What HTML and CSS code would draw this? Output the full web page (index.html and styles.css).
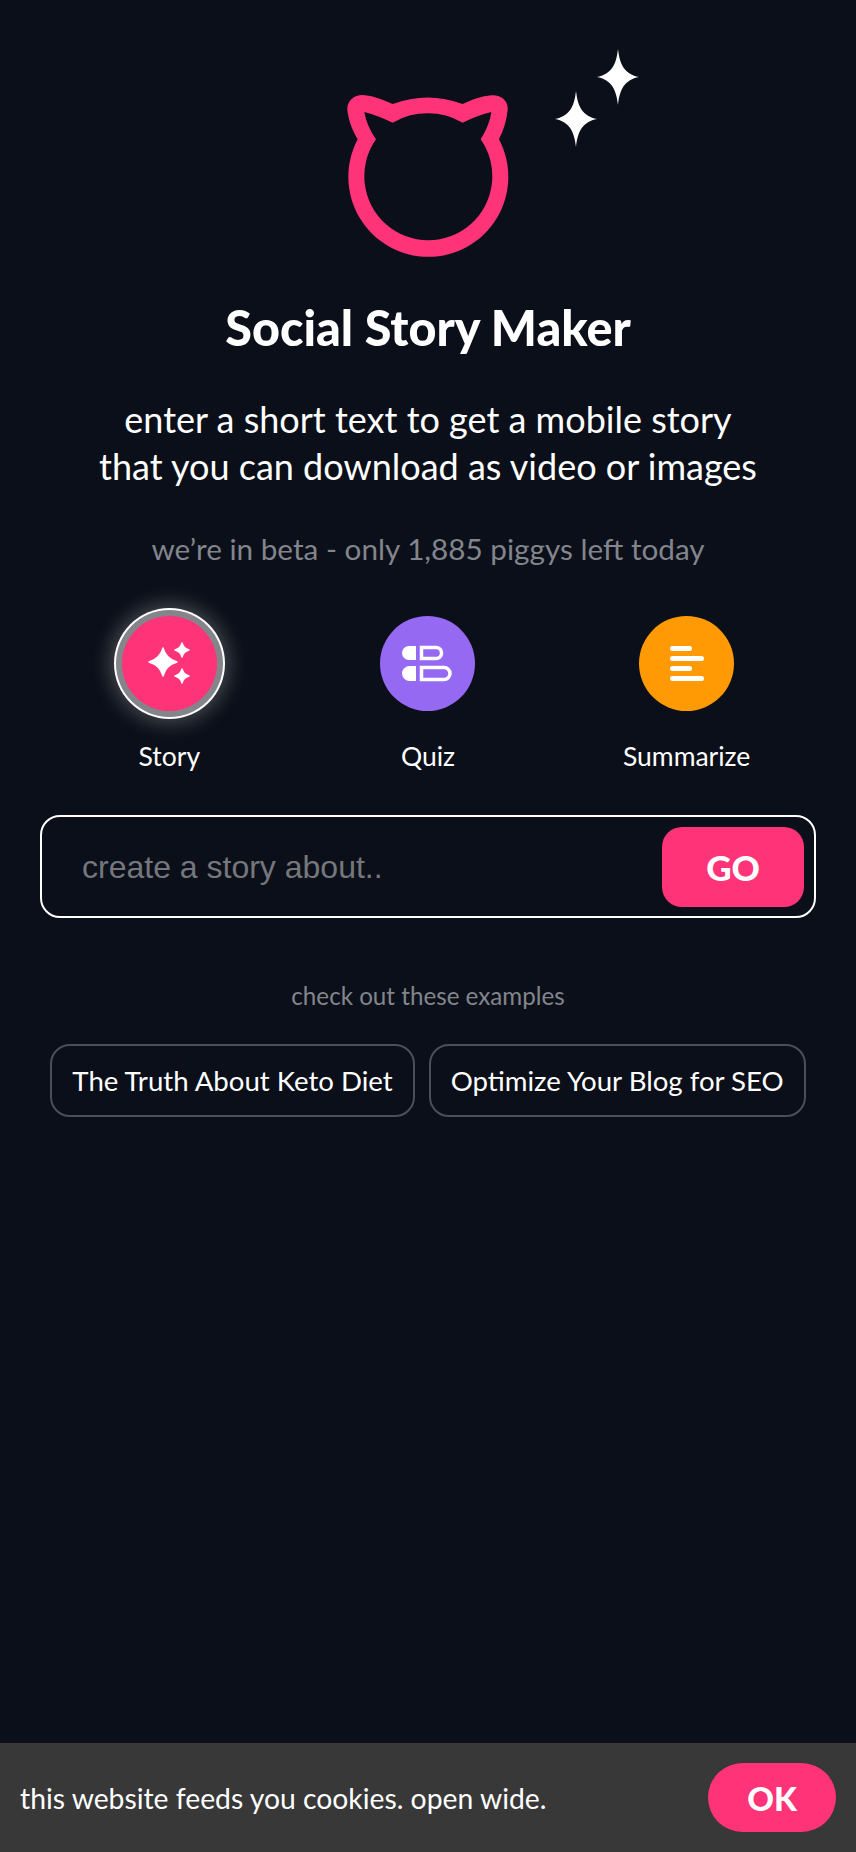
FILE: index.html
```html
<!DOCTYPE html>
<html lang="en">
  <head>
    <meta charset="UTF-8" />
    <title>Social Story Maker</title>
    <link rel="stylesheet" href="styles.css">
  </head>
  <body>
    <main class="content">
      <svg class="logo" width="440" height="215" viewBox="208 45 440 215">
        <g transform="translate(320 30) scale(0.3333)">
          <path class="logo-cat" fill-rule="evenodd" d="M218 222 A299 299 0 0 1 428 222 C455 210 485 198 515 196 C545 194 566 215 563 240 C560 270 552 298 537 328 A240 240 0 1 1 113 328 C95 298 85 268 82 240 C80 215 100 195 128 195 C160 197 190 210 218 222 Z M218 278 C190 265 160 252 133 246 C138 275 150 302 168 328 A192 192 0 1 0 482 328 C498 302 510 275 514 246 C485 252 455 265 428 278 A211 211 0 0 0 218 278 Z" />
        </g>
        <path class="logo-star" transform="translate(618 77)" d="M0 -28 C2 -11 7 -3 21 0 C7 3 2 11 0 28 C-2 11 -7 3 -21 0 C-7 -3 -2 -11 0 -28 Z" />
        <path class="logo-star" transform="translate(576 119)" d="M0 -28 C2 -11 7 -3 21 0 C7 3 2 11 0 28 C-2 11 -7 3 -21 0 C-7 -3 -2 -11 0 -28 Z" />
      </svg>

      <h1>Social Story Maker</h1>
      <p class="subtitle">enter a short text to get a mobile story<br>that you can download as video or images</p>
      <p class="beta">we’re in beta - only 1,885 piggys left today</p>

      <div class="modes">
        <div class="mode">
          <div class="mode-icon mode-story mode-active">
            <svg width="95" height="95" viewBox="122 617 95 95">
              <path class="icon-star" d="M163 649 C165 657 170 661 177 663 C170 665 165 669 163 677 C161 669 156 665 149 663 C156 661 161 657 163 649 Z" />
              <path class="icon-star" d="M182 644 C183 648 185 650 189 651 C185 652 183 654 182 658 C181 654 179 652 175 651 C179 650 181 648 182 644 Z" />
              <path class="icon-star" d="M182 670 C183 674 185 676 189 677 C185 678 183 680 182 684 C181 680 179 678 175 677 C179 676 181 674 182 670 Z" />
            </svg>
          </div>
          <span class="mode-label">Story</span>
        </div>
        <div class="mode">
          <div class="mode-icon mode-quiz">
            <svg width="95" height="95" viewBox="381 617 95 95">
              <path class="icon-fill" d="M417 647 V661 H410 A7 7 0 0 1 410 647 Z" />
              <path class="icon-fill" d="M417 667 V682 H410.500 A7.500 7.500 0 0 1 410.500 667 Z" />
              <path class="icon-line" d="M422.500 648.500 H437 A5.500 5.500 0 0 1 437 659.500 H422.500 Z" />
              <path class="icon-line" d="M422.500 668.500 H445 A6 6 0 0 1 445 680.500 H422.500 Z" />
            </svg>
          </div>
          <span class="mode-label">Quiz</span>
        </div>
        <div class="mode">
          <div class="mode-icon mode-summarize">
            <div class="bars">
              <span class="bar bar-short"></span>
              <span class="bar"></span>
              <span class="bar bar-short"></span>
              <span class="bar"></span>
            </div>
          </div>
          <span class="mode-label">Summarize</span>
        </div>
      </div>

      <form class="prompt">
        <input class="prompt-input" type="text" placeholder="create a story about.." />
        <button class="prompt-go" type="button">GO</button>
      </form>

      <p class="examples-title">check out these examples</p>
      <div class="examples">
        <button class="chip" type="button">The Truth About Keto Diet</button>
        <button class="chip" type="button">Optimize Your Blog for SEO</button>
      </div>
    </main>

    <div class="cookie-bar">
      <span class="cookie-text">this website feeds you cookies. open wide.</span>
      <button class="cookie-ok" type="button">OK</button>
    </div>
  </body>
</html>
```

FILE: styles.css
```css
* {
  margin: 0;
  padding: 0;
  box-sizing: border-box;
}
html,
body {
  height: 100%;
}
body {
  font-family: Lato, "Open Sans", sans-serif;
  background: #0b0f19;
  color: #fff;
  display: flex;
  flex-direction: column;
  justify-content: space-between;
}

button {
  font-family: inherit;
  border: none;
  color: #fff;
  cursor: pointer;
}

.content {
  padding: 45px 40px 0;
  display: flex;
  flex-direction: column;
  align-items: center;
  text-align: center;
}

.logo {
  display: block;
}
.logo-cat {
  fill: #ff3377;
}
.logo-star {
  fill: #fff;
}

h1 {
  margin-top: 39px;
  font-size: 48.500px;
  line-height: 56px;
  font-weight: 900;
}

.subtitle {
  margin-top: 41px;
  font-size: 36px;
  line-height: 47px;
}

.beta {
  margin-top: 41px;
  font-size: 29.700px;
  line-height: 36px;
  color: #82858c;
}

.modes {
  margin-top: 49px;
  width: 100%;
  display: grid;
  grid-template-columns: repeat(3, 1fr);
}

.mode {
  display: flex;
  flex-direction: column;
  align-items: center;
}

.mode-icon {
  width: 95px;
  height: 95px;
  border-radius: 50%;
  display: flex;
  align-items: center;
  justify-content: center;
}
.mode-story {
  background: #ff3377;
}
.mode-quiz {
  background: #9569f2;
}
.mode-summarize {
  background: #ff9a05;
}
.mode-active {
  box-shadow: 0 0 0 6px #84858a, 0 0 0 8px #fff, 0 0 20px 12px rgba(255, 255, 255, 0.25);
}

.icon-fill {
  fill: #fff;
}
.icon-star {
  fill: #fff;
  stroke: #fff;
  stroke-width: 1.500;
  stroke-linejoin: round;
}
.icon-line {
  fill: none;
  stroke: #fff;
  stroke-width: 3.500;
}

.bars {
  width: 34px;
  display: flex;
  flex-direction: column;
  gap: 5px;
}
.bar {
  height: 5px;
  border-radius: 3px;
  background: #fff;
}
.bar-short {
  width: 22px;
}

.mode-label {
  margin-top: 30px;
  font-size: 26.500px;
  line-height: 30px;
}

.prompt {
  margin-top: 44px;
  width: 100%;
  height: 103px;
  border: 2px solid #fff;
  border-radius: 20px;
  padding: 10px 10px 9px 40px;
  display: flex;
  align-items: center;
}

.prompt-input {
  flex: 1;
  min-width: 0;
  height: 100%;
  background: none;
  border: none;
  outline: none;
  color: #fff;
  font-family: "Liberation Sans", Arial, sans-serif;
  font-size: 32px;
}
.prompt-input::placeholder {
  color: #75777c;
}

.prompt-go {
  width: 142px;
  height: 80px;
  border-radius: 20px;
  background: #ff3377;
  font-size: 35px;
  font-weight: 900;
}

.examples-title {
  margin-top: 63px;
  font-size: 24.200px;
  line-height: 30px;
  color: #82858c;
}

.examples {
  margin-top: 33px;
  display: flex;
  justify-content: center;
  gap: 14px;
}

.chip {
  height: 73px;
  padding: 0 20px;
  background: none;
  border: 2px solid #4b4f59;
  border-radius: 20px;
  font-size: 27.600px;
  white-space: nowrap;
}

.cookie-bar {
  height: 109px;
  background: #383838;
  padding: 0 20px;
  display: flex;
  align-items: center;
  justify-content: space-between;
}

.cookie-text {
  font-size: 28.300px;
}

.cookie-ok {
  width: 128px;
  height: 69px;
  border-radius: 35px;
  background: #ff3377;
  font-size: 33px;
  font-weight: 900;
}
```
